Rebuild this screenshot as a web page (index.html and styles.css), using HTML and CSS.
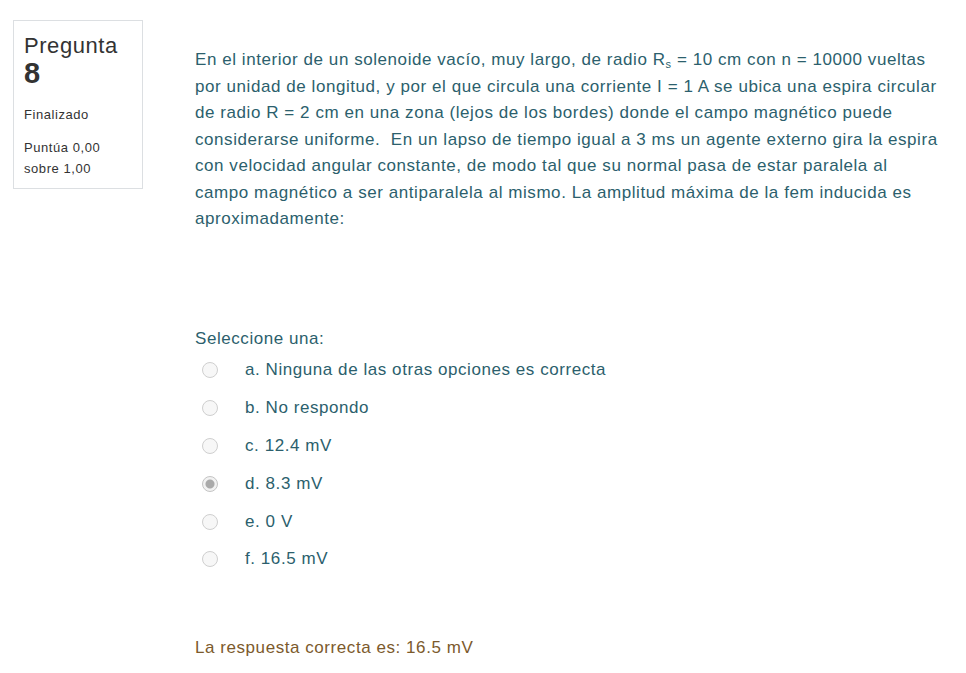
FILE: index.html
```html
<!DOCTYPE html>
<html lang="es">
<head>
<meta charset="utf-8">
<link rel="stylesheet" href="styles.css">
</head>
<body>
<div class="que">
  <div class="info">
    <h3 class="no">Pregunta <span class="qno">8</span></h3>
    <div class="state">Finalizado</div>
    <div class="grade">Puntúa 0,00<br>sobre 1,00</div>
  </div>
  <div class="content">
    <p class="qtext">En el interior de un solenoide vacío, muy largo, de radio R<sub>s</sub> = 10 cm con n = 10000 vueltas por unidad de longitud, y por el que circula una corriente I = 1 A se ubica una espira circular de radio R = 2 cm en una zona (lejos de los bordes) donde el campo magnético puede considerarse uniforme.&nbsp; En un lapso de tiempo igual a 3 ms un agente externo gira la espira con velocidad angular constante, de modo tal que su normal pasa de estar paralela al campo magnético a ser antiparalela al mismo. La amplitud máxima de la fem inducida es aproximadamente:</p>
    <div class="ablock">
      <div class="prompt">Seleccione una:</div>
      <div class="answers">
        <div class="opt"><span class="radio"></span><span>a. Ninguna de las otras opciones es correcta</span></div>
        <div class="opt"><span class="radio"></span><span>b. No respondo</span></div>
        <div class="opt"><span class="radio"></span><span>c. 12.4 mV</span></div>
        <div class="opt"><span class="radio checked"></span><span>d. 8.3 mV</span></div>
        <div class="opt"><span class="radio"></span><span>e. 0 V</span></div>
        <div class="opt"><span class="radio"></span><span>f. 16.5 mV</span></div>
      </div>
    </div>
    <div class="outcome">La respuesta correcta es: 16.5 mV</div>
  </div>
</div>
</body>
</html>
```
FILE: styles.css
```css
html, body {
  margin: 0;
  padding: 0;
  background: #fff;
}
body {
  font-family: "Liberation Sans", Arial, sans-serif;
  letter-spacing: 0.035em;
}
.que {
  display: flex;
  align-items: flex-start;
  padding: 20px 0 0 13px;
}
.info {
  width: 108px;
  border: 1px solid #dcdfe2;
  padding: 12px 10px 10px 10px;
  color: #333;
  box-sizing: content-box;
  height: 145px;
}
.no {
  margin: 0;
  font-weight: normal;
  font-size: 22px;
  line-height: 25px;
}
.qno {
  display: block;
  font-weight: bold;
  font-size: 29px;
  line-height: 30px;
}
.state {
  font-size: 13px;
  margin-top: 18px;
  line-height: 18px;
}
.grade {
  font-size: 13px;
  margin-top: 13px;
  line-height: 21px;
}
.content {
  margin-left: 52px;
  width: 748px;
  color: #2c5f6d;
  font-size: 17px;
}
.qtext {
  margin: 27px 0 0 0;
  line-height: 26.5px;
}
.qtext sub {
  font-size: 11px;
  vertical-align: -3px;
  line-height: 0;
}
.ablock {
  margin-top: 93px;
}
.prompt {
  line-height: 26px;
}
.answers {
  margin-top: 0;
}
.opt {
  display: flex;
  align-items: center;
  height: 37.8px;
}
.radio {
  width: 16px;
  height: 16px;
  border: 1px solid #cfcfcf;
  border-radius: 50%;
  background: #f7f7f7;
  margin: 0 27px 0 7px;
  box-sizing: border-box;
  flex: none;
}
.radio.checked {
  background: radial-gradient(circle, #aaaaaa 0 4px, #f2f2f2 5px);
  border-color: #c4c4c4;
}
.outcome {
  margin-top: 57px;
  color: #7c5a2c;
  line-height: 26px;
}
```
